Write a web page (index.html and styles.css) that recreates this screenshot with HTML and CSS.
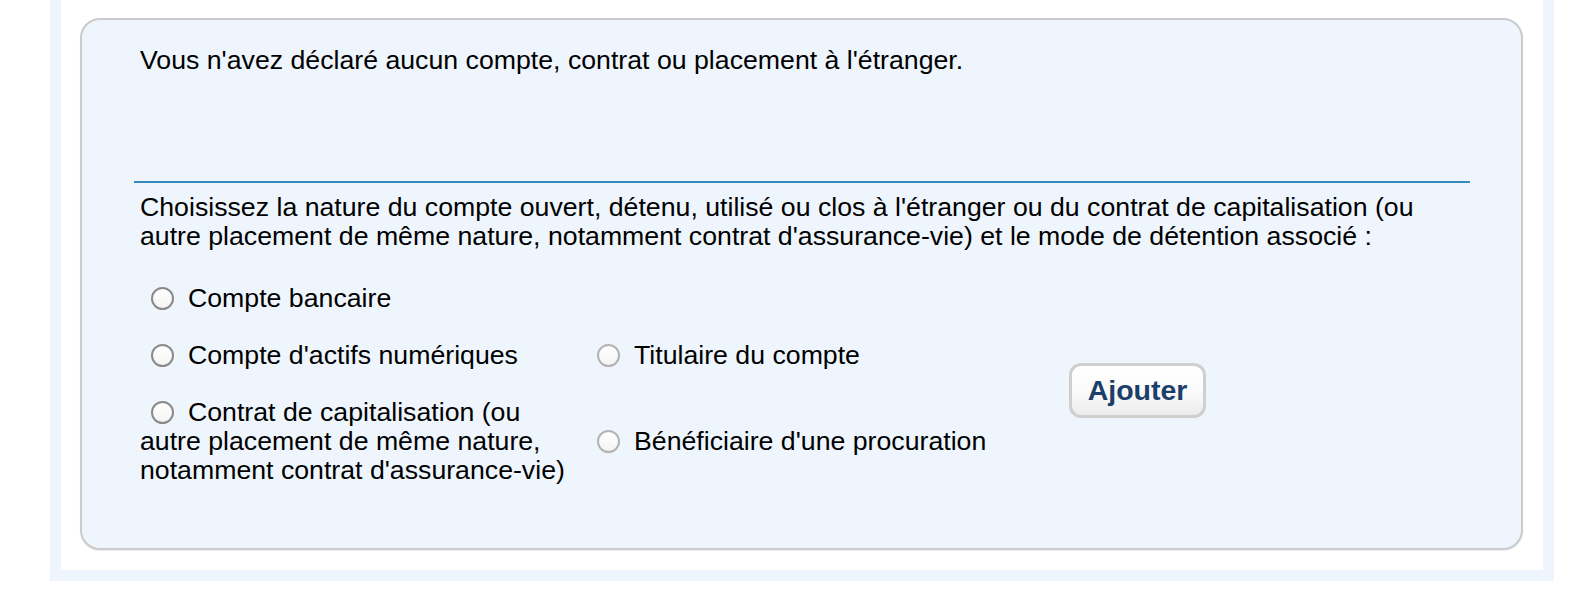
FILE: index.html
```html
<!DOCTYPE html>
<html lang="fr">
<head>
<meta charset="utf-8">
<title>Comptes à l'étranger</title>
<link rel="stylesheet" href="styles.css">
</head>
<body>
<div class="frame">
  <div class="panel">
    <p class="empty">Vous n'avez déclaré aucun compte, contrat ou placement à l'étranger.</p>
    <hr class="sep">
    <p class="intro">Choisissez la nature du compte ouvert, détenu, utilisé ou clos à l'étranger ou du contrat de capitalisation (ou autre placement de même nature, notamment contrat d'assurance-vie) et le mode de détention associé :</p>
    <div class="choices">
      <label class="opt c1 r1"><input type="radio" name="nature" class="radio">Compte bancaire</label>
      <label class="opt c1 r2"><input type="radio" name="nature" class="radio">Compte d'actifs numériques</label>
      <label class="opt c1 r3"><input type="radio" name="nature" class="radio">Contrat de capitalisation (ou autre placement de même nature, notamment contrat d'assurance-vie)</label>
      <label class="opt c2 r2"><input type="radio" name="mode" class="radio light">Titulaire du compte</label>
      <label class="opt c2 r3 mid"><input type="radio" name="mode" class="radio light">Bénéficiaire d'une procuration</label>
      <div class="action"><button type="button" class="btn">Ajouter</button></div>
    </div>
  </div>
</div>
</body>
</html>
```
FILE: styles.css
```css
html, body {
  margin: 0;
  padding: 0;
  background: #ffffff;
}
body {
  font-family: "Liberation Sans", Arial, sans-serif;
  font-size: 26.7px;
  color: #000;
}
.frame {
  box-sizing: border-box;
  margin-left: 50px;
  width: 1504px;
  border: 11px solid #eef5fd;
  border-top: 0;
  background: #fff;
  padding: 18px 20px 20px 19px;
}
.panel {
  background: #eef5fd;
  border: 2px solid #cbcbcb;
  border-radius: 20px;
  box-shadow: 0 1px 1px rgba(0, 0, 0, 0.08);
  padding: 26px 51px 63px 52px;
}
.empty {
  margin: 0 0 106px 0;
  padding-left: 6px;
  line-height: 29px;
}
.sep {
  border: 0;
  height: 2px;
  margin: 0;
  background: #3a89bd;
}
.intro {
  margin: 10px 0 0 0;
  padding: 0 20px 0 6px;
  line-height: 29px;
}
.choices {
  margin-top: 33px;
  padding-left: 6px;
  display: grid;
  grid-template-columns: 446px 483px auto;
  grid-template-rows: auto auto auto;
  row-gap: 28px;
}
.opt {
  display: block;
  line-height: 29px;
}
.c1 { grid-column: 1; padding-right: 20px; }
.c2 { grid-column: 2; }
.r1 { grid-row: 1; }
.r2 { grid-row: 2; }
.r3 { grid-row: 3; }
.mid { align-self: center; }
.radio {
  -webkit-appearance: none;
  appearance: none;
  width: 23px;
  height: 23px;
  box-sizing: border-box;
  border: 2px solid #8a8a8a;
  border-radius: 50%;
  background: linear-gradient(#ffffff, #f4f4f4);
  margin: 0 14px 0 11px;
  vertical-align: middle;
  position: relative;
  top: -1px;
}
.radio.light {
  border-color: #b3b3b3;
}
.action {
  grid-column: 3;
  grid-row: 2 / span 2;
  align-self: start;
  margin-top: 22px;
}
.btn {
  width: 137px;
  height: 55px;
  box-sizing: border-box;
  border: 3px solid #cfcfcf;
  border-radius: 12px;
  background: linear-gradient(#ffffff 0%, #fbfbfb 50%, #ececec 100%);
  font-family: "Liberation Sans", Arial, sans-serif;
  font-weight: bold;
  font-size: 28.5px;
  color: #1c3e6b;
  padding: 0;
  cursor: pointer;
}
```
